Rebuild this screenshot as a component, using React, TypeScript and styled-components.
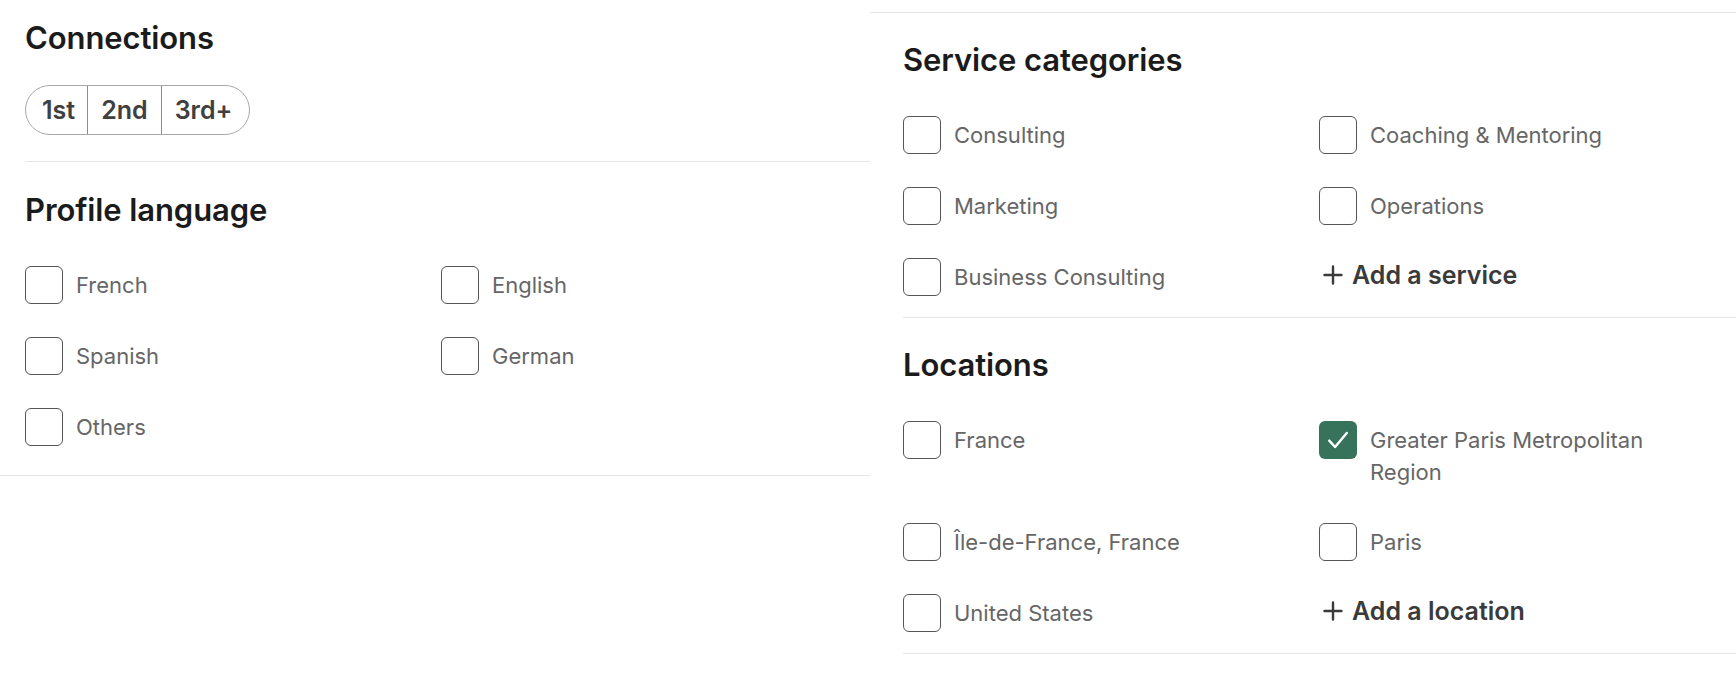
import React, { FC } from 'react';
import styled, { createGlobalStyle } from 'styled-components';

const GlobalStyle = createGlobalStyle`
  html, body {
    margin: 0;
    padding: 0;
    background: #ffffff;
    font-family: Inter, "Noto Sans", "Liberation Sans", sans-serif;
  }
`;

const Page = styled.div`
  display: flex;
  width: 1736px;
  height: 674px;
  overflow: hidden;
  background: #ffffff;
`;

const LeftPanel = styled.div`
  width: 870px;
  flex-shrink: 0;
`;

const RightPanel = styled.div`
  flex: 1;
  margin-top: 12px;
  border-top: 1px solid #e6e6e6;
`;

type SectionProps = {
  $top: number;
  $bottom: number;
  $inset: number;
  $lineInset?: boolean;
};

// $lineInset: the divider starts where the text starts, not at the panel edge
const Section = styled.section<SectionProps>`
  padding-top: ${(p) => p.$top}px;
  padding-bottom: ${(p) => p.$bottom}px;
  padding-left: ${(p) => (p.$lineInset ? 0 : p.$inset)}px;
  margin-left: ${(p) => (p.$lineInset ? p.$inset : 0)}px;
  border-bottom: 1px solid #e6e6e6;
`;

const Heading = styled.h2<{ $gap: number }>`
  margin: 0 0 ${(p) => p.$gap}px;
  font-size: 31px;
  line-height: 36px;
  font-weight: 600;
  color: #1b1b1b;
  letter-spacing: -0.1px;
`;

const Segmented = styled.div`
  display: inline-flex;
  height: 50px;
  border: 1px solid #a8a8a8;
  border-radius: 26px;
  overflow: hidden;
  box-sizing: border-box;
`;

const Segment = styled.button`
  display: flex;
  align-items: center;
  padding: 0 13px;
  border: none;
  background: transparent;
  font-family: inherit;
  font-size: 25px;
  font-weight: 600;
  color: #404040;
  cursor: pointer;

  & + & {
    border-left: 1px solid #8c8c8c;
  }

  &:first-child {
    padding-left: 16px;
    padding-right: 12px;
  }

  &:last-child {
    padding-right: 17px;
  }
`;

const OptionGrid = styled.div`
  display: grid;
  grid-template-columns: 416px 416px;
  row-gap: 33px;
`;

const Option = styled.label`
  display: flex;
  align-items: flex-start;
  gap: 13px;
  cursor: pointer;
`;

const Box = styled.span<{ $checked: boolean }>`
  width: 38px;
  height: 38px;
  flex-shrink: 0;
  box-sizing: border-box;
  border-radius: 6px;
  border: ${(p) => (p.$checked ? 'none' : '1.5px solid #555')};
  background: ${(p) => (p.$checked ? '#36735a' : '#fff')};
  display: flex;
  align-items: center;
  justify-content: center;
`;

const OptionText = styled.span`
  padding: 3px 0 2px;
  max-width: 310px;
  font-size: 22px;
  line-height: 32px;
  color: #666666;
`;

const AddLink = styled.button`
  display: flex;
  align-items: center;
  align-self: start;
  gap: 9px;
  height: 34px;
  padding: 0 0 0 4px;
  border: none;
  background: transparent;
  font-family: inherit;
  font-size: 25px;
  font-weight: 600;
  color: #3a3a3a;
  cursor: pointer;
`;

type OptionItem = { label: string; checked?: boolean };

const CheckIcon: FC = () => (
  <svg width="28" height="28" viewBox="0 0 24 24" fill="none">
    <path d="M4.5 12.5l5 5.5 10-12" stroke="#fff" strokeWidth="2.1" strokeLinecap="round" strokeLinejoin="round" />
  </svg>
);

const PlusIcon: FC = () => (
  <svg width="20" height="20" viewBox="0 0 20 20" fill="none">
    <path d="M10 1.5v17M1.5 10h17" stroke="#3a3a3a" strokeWidth="2.4" strokeLinecap="round" />
  </svg>
);

const Checkbox: FC<OptionItem> = ({ label, checked = false }) => (
  <Option>
    <Box $checked={checked}>{checked && <CheckIcon />}</Box>
    <OptionText>{label}</OptionText>
  </Option>
);

const Options: FC<{ items: OptionItem[]; addLabel?: string }> = ({ items, addLabel }) => (
  <OptionGrid>
    {items.map((item) => (
      <Checkbox key={item.label} label={item.label} checked={item.checked} />
    ))}
    {addLabel && (
      <AddLink type="button">
        <PlusIcon />
        {addLabel}
      </AddLink>
    )}
  </OptionGrid>
);

const languages: OptionItem[] = [
  { label: 'French' },
  { label: 'English' },
  { label: 'Spanish' },
  { label: 'German' },
  { label: 'Others' },
];

const services: OptionItem[] = [
  { label: 'Consulting' },
  { label: 'Coaching & Mentoring' },
  { label: 'Marketing' },
  { label: 'Operations' },
  { label: 'Business Consulting' },
];

const locations: OptionItem[] = [
  { label: 'France' },
  { label: 'Greater Paris Metropolitan Region', checked: true },
  { label: 'Île-de-France, France' },
  { label: 'Paris' },
  { label: 'United States' },
];

export default function App() {
  return (
    <>
      <GlobalStyle />
      <Page>
        <LeftPanel>
          <Section $top={20} $bottom={26} $inset={25} $lineInset>
            <Heading $gap={29}>Connections</Heading>
            <Segmented>
              <Segment type="button">1st</Segment>
              <Segment type="button">2nd</Segment>
              <Segment type="button">3rd+</Segment>
            </Segmented>
          </Section>
          <Section $top={30} $bottom={29} $inset={25}>
            <Heading $gap={38}>Profile language</Heading>
            <Options items={languages} />
          </Section>
        </LeftPanel>

        <RightPanel>
          <Section $top={29} $bottom={21} $inset={33} $lineInset>
            <Heading $gap={38}>Service categories</Heading>
            <Options items={services} addLabel="Add a service" />
          </Section>
          <Section $top={29} $bottom={21} $inset={33} $lineInset>
            <Heading $gap={38}>Locations</Heading>
            <Options items={locations} addLabel="Add a location" />
          </Section>
        </RightPanel>
      </Page>
    </>
  );
}
